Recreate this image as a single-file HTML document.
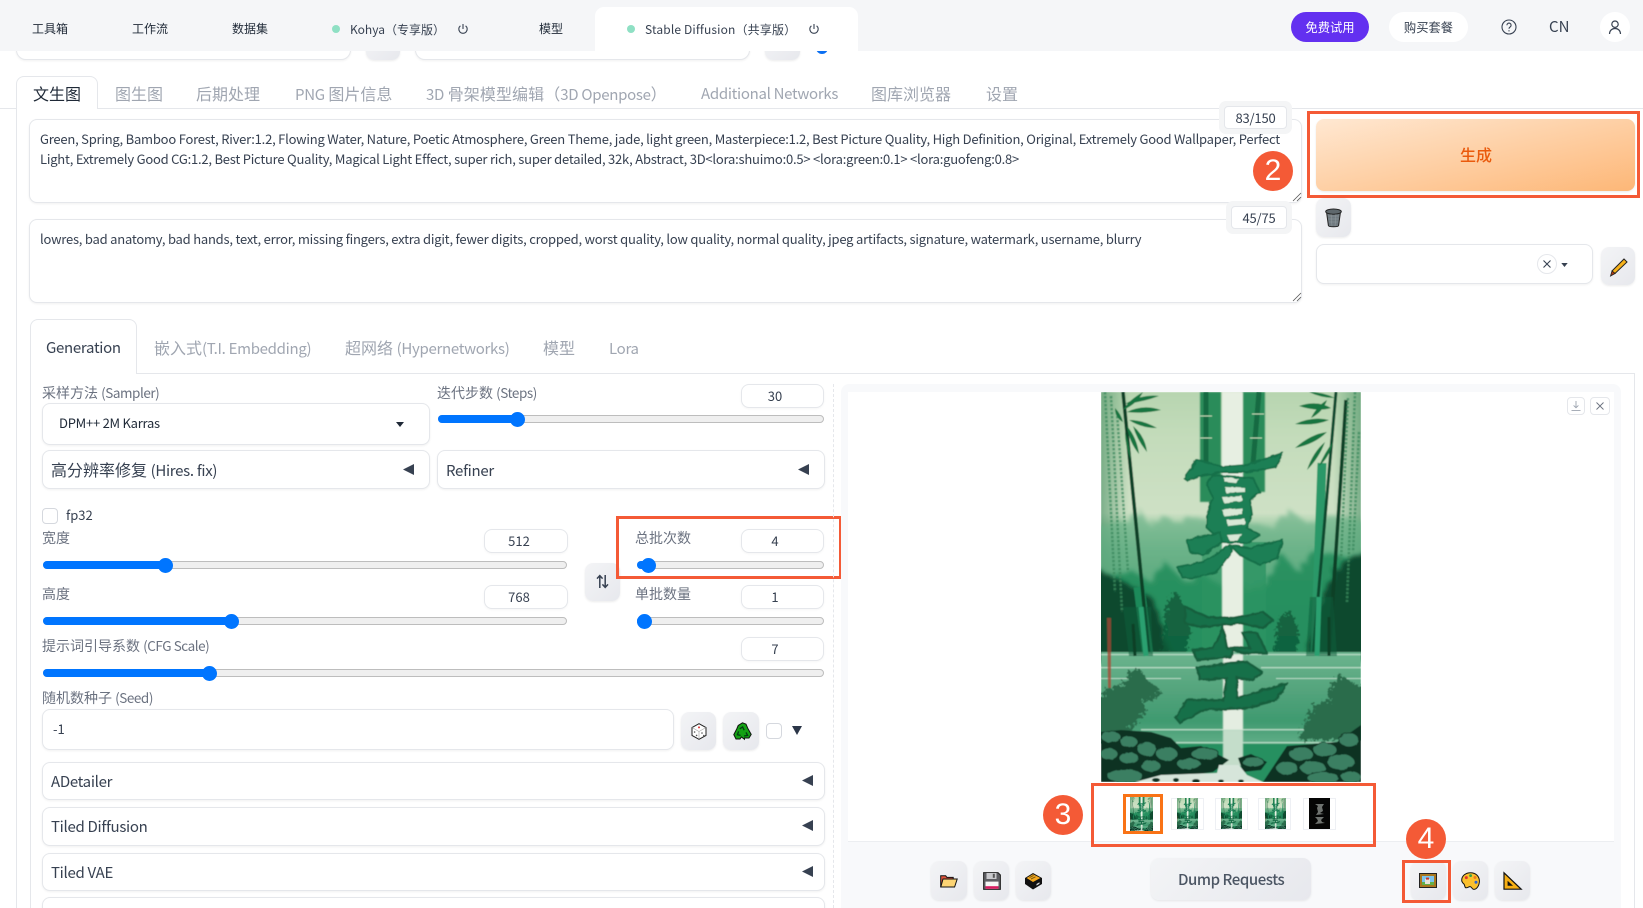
<!DOCTYPE html>
<html lang="zh"><head><meta charset="utf-8"><title>Stable Diffusion</title>
<style>
html,body{margin:0;padding:0;width:1643px;height:908px;overflow:hidden;background:#fff}
body{position:relative;font-family:"Noto Sans CJK SC","Liberation Sans",sans-serif;color:#374151;font-size:14px}
.a{position:absolute;box-sizing:border-box}
.t{position:absolute;white-space:nowrap;line-height:20px;height:20px}
.box{position:absolute;box-sizing:border-box;background:#fff;border:1px solid #e5e7eb;border-radius:8px;box-shadow:0 1px 2px rgba(0,0,0,.06)}
.btn{position:absolute;box-sizing:border-box;background:linear-gradient(135deg,#f3f4f6,#e7e8ed);border-radius:8px;box-shadow:0 1px 2px rgba(0,0,0,.08)}
.red{position:absolute;box-sizing:border-box;border:3px solid #f45a36}
.badge{position:absolute;width:40px;height:40px;border-radius:50%;background:#f45a36;color:#fff;text-align:center;line-height:40px;font-size:30px;font-family:"Liberation Sans",sans-serif}
.lb{color:#6b7280;font-size:14px}
.tab{color:#a0a6b1;font-size:16px}
.sl{position:absolute;box-sizing:border-box;height:8px;border-radius:4px;background:#efefef;border:1px solid #bdbdbd}
.fl{position:absolute;height:8px;border-radius:4px;background:#0075ff}
.th{position:absolute;width:15px;height:15px;border-radius:50%;background:#0075ff}
.num{position:absolute;box-sizing:border-box;height:24px;width:83px;background:#fff;border:1px solid #e5e7eb;border-radius:8px;line-height:22px;font-size:13px;box-shadow:0 1px 2px rgba(0,0,0,.04)}
.num span{position:absolute;top:0;transform:translateX(-50%)}
.hd{font-size:12px;color:#1f2937}
.ic{position:absolute;overflow:visible}
.p{font-size:13px;color:#374151;letter-spacing:-.22px}
i{font-style:normal}
.L{font-size:15px;letter-spacing:-.3px}
.S{font-size:13.5px;letter-spacing:-.45px}
svg{display:block}
</style></head><body>

<svg width="0" height="0" style="position:absolute"><defs>
<linearGradient id="sky" x1="0" y1="0" x2="0" y2="1">
<stop offset="0" stop-color="#b7d5b0"/><stop offset=".12" stop-color="#c4dcbb"/><stop offset=".31" stop-color="#cee1c5"/><stop offset=".34" stop-color="#a6cfab"/><stop offset=".4" stop-color="#72b68d"/><stop offset=".5" stop-color="#3f9c6d"/><stop offset=".66" stop-color="#259060"/><stop offset="1" stop-color="#259060"/>
</linearGradient>
<linearGradient id="wat" x1="0" y1="0" x2="0" y2="1"><stop offset="0" stop-color="#6cb48e"/><stop offset=".45" stop-color="#52a37b"/><stop offset=".75" stop-color="#3f9a70"/><stop offset="1" stop-color="#62ae88"/></linearGradient>
<linearGradient id="edgeL" x1="0" y1="0" x2="1" y2="0"><stop offset="0" stop-color="#2d7f52" stop-opacity=".5"/><stop offset="1" stop-color="#2d7f52" stop-opacity="0"/></linearGradient>
<linearGradient id="edgeR" x1="1" y1="0" x2="0" y2="0"><stop offset="0" stop-color="#2d7f52" stop-opacity=".5"/><stop offset="1" stop-color="#2d7f52" stop-opacity="0"/></linearGradient>
<filter id="soft" x="0" y="0" width="100%" height="100%"><feGaussianBlur stdDeviation=".45"/></filter>
<filter id="mist" x="-10%" y="-10%" width="120%" height="120%"><feTurbulence type="fractalNoise" baseFrequency=".12" numOctaves="3" seed="4" result="n"/><feDisplacementMap in="SourceGraphic" in2="n" scale="12"/><feGaussianBlur stdDeviation="2"/></filter>
<filter id="rough" x="-15%" y="-15%" width="130%" height="130%"><feTurbulence type="fractalNoise" baseFrequency=".3" numOctaves="3" seed="7" result="n"/><feDisplacementMap in="SourceGraphic" in2="n" scale="12"/></filter>
<filter id="rough2" x="-10%" y="-10%" width="120%" height="120%"><feTurbulence type="fractalNoise" baseFrequency=".15" numOctaves="2" seed="2" result="n"/><feDisplacementMap in="SourceGraphic" in2="n" scale="3"/></filter>
<filter id="bl2" x="-10%" y="-10%" width="120%" height="120%"><feGaussianBlur stdDeviation=".6"/></filter>
<symbol id="art" viewBox="0 0 260 390" preserveAspectRatio="none">
<g filter="url(#soft)">
<rect width="260" height="390" fill="url(#sky)"/>
<rect x="0" width="28" height="265" fill="url(#edgeL)"/><rect x="232" width="28" height="265" fill="url(#edgeR)"/>
<!-- mist forest -->
<path filter="url(#mist)" fill="#6ab288" opacity=".65" d="M-10 135L22 130 40 118 50 135 64 124 76 132 96 124 118 136 150 130 172 136 188 118 208 132 232 124 270 130V270H-10Z"/>
<path filter="url(#mist)" fill="#1c8a58" opacity=".8" d="M-10 190L30 178 50 190 64 170 84 190 100 180 130 200 165 190 180 160 196 180 212 158 270 170V270H-10Z"/>
<path filter="url(#mist)" fill="#0c4a2e" d="M-10 175L24 190 50 205 62 235 70 268H-10ZM270 155L240 170 226 195 214 230 204 268H270Z"/>
<path filter="url(#rough)" fill="#0f5a38" opacity=".8" d="M66 210L76 200 84 216 90 240 84 262 60 262ZM178 226L190 218 198 240 195 262 172 262Z"/>
<!-- central bamboo -->
<rect x="99" y="0" width="21" height="110" fill="#2a8c5a" filter="url(#bl2)"/><rect x="141" y="0" width="23" height="100" fill="#2a8c5a" filter="url(#bl2)"/>
<path d="M105 0V72M158 0L152 72" stroke="#146b42" stroke-width="5" fill="none"/>
<path d="M99 24h12M99 46h12M151 22h12M149 46h12" stroke="#bcd9b6" stroke-width="1"/>
<rect x="141" y="150" width="24" height="115" fill="#2d9463" opacity=".85"/><rect x="101" y="150" width="20" height="115" fill="#2d9463" opacity=".6"/>
<rect x="121" y="0" width="21" height="262" fill="#e7efe2" filter="url(#bl2)"/>
<!-- side bamboo -->
<g fill="none">
<path d="M38 195L47 264" stroke="#1f8a5a" stroke-width="11"/><path d="M221 71L214 264" stroke="#2b9868" stroke-width="9"/>
<path d="M22 0L48 264" stroke="#0b3f28" stroke-width="3.5"/><path d="M235 0L212 264" stroke="#0e4a2f" stroke-width="3"/><path d="M245 8L228 264" stroke="#0b3f28" stroke-width="3.5"/>
<g stroke="#3b8a5e" stroke-width="2.6" stroke-dasharray="2.5 1.5" opacity=".75"><path d="M4 0L14 200M10 4L21 220M16 20L27 180M254 0L246 210M247 6L240 170M258 40L252 160"/></g>
</g>
<!-- leaves -->
<g fill="#14743f">
<path d="M24 12Q40 2 58 4Q42 10 24 12ZM26 20Q42 12 60 18Q42 22 26 20ZM28 28Q42 28 56 36Q40 36 28 28ZM32 34Q44 44 46 60Q36 48 32 34ZM26 34Q36 46 38 62Q28 50 26 34ZM22 18Q28 8 42 0Q36 12 22 18ZM24 40Q28 50 30 68Q24 54 24 40ZM14 16Q20 22 22 30Q14 26 14 16Z"/>
<path d="M234 6Q222 0 208 0Q220 6 234 6ZM230 16Q216 8 198 14Q216 20 230 16ZM228 28Q212 24 194 32Q214 34 228 28ZM226 40Q210 42 194 56Q214 52 226 40ZM224 50Q212 60 206 78Q218 66 224 50ZM232 50Q224 60 218 74Q228 66 232 50ZM226 8Q216 14 210 26Q222 20 226 8Z"/>
</g>
<!-- water -->
<rect x="0" y="260" width="260" height="92" fill="url(#wat)"/>
<g fill="#c4e2cf" opacity=".85"><rect x="0" y="262" width="122" height="1.2"/><rect x="142" y="262" width="118" height="1.2"/><rect x="0" y="275" width="100" height="1.3"/><rect x="160" y="275" width="100" height="1.3"/><rect x="0" y="286" width="80" height="1"/><rect x="175" y="286" width="85" height="1"/><rect x="40" y="337" width="190" height="1.4"/><rect x="75" y="350" width="170" height="1.2"/></g>
<rect x="122" y="262" width="20" height="76" fill="#e4ede1" filter="url(#bl2)"/><rect x="122" y="338" width="20" height="36" fill="#c4ddca" filter="url(#bl2)"/>
<!-- bamboo bases -->
<path d="M22 215H50L52 264H28ZM209 205H232L236 264H205Z" fill="#0f5c3a" opacity=".55"/>
<path d="M40 215L45 264M218 205L216 264" stroke="#2aa070" stroke-width="5"/>
<path d="M32 232L34 264M228 225L228 264" stroke="#0b3f28" stroke-width="3"/>
<path fill="#a84632" opacity=".75" d="M6 226h4v70H7z"/>
<!-- trees -->
<path filter="url(#rough)" fill="#2a6c4c" d="M30 278L40 278 46 288 60 298 56 306 44 310 44 322 24 342 -6 352V308L8 296 22 292ZM240 282L250 290 266 296V348H198L208 322 214 312 228 308 228 296Z"/>
<!-- rocks -->
<path fill="#0c3323" d="M0 340L20 338 50 340 70 346 80 356 100 354 128 368 112 380 70 386 45 390H0ZM260 333L236 350 186 354 162 390H260ZM137 366L150 362 166 370 160 378 142 380Z"/>
<g fill="#3a7f62" stroke="#0a2c1d" stroke-width=".8" filter="url(#rough2)">
<ellipse cx="10" cy="345" rx="10" ry="6"/><ellipse cx="28" cy="350" rx="9" ry="6"/><ellipse cx="8" cy="362" rx="9" ry="6"/><ellipse cx="46" cy="357" rx="10" ry="7"/><ellipse cx="28" cy="366" rx="10" ry="6"/><ellipse cx="66" cy="362" rx="11" ry="7"/><ellipse cx="50" cy="374" rx="10" ry="6"/><ellipse cx="88" cy="372" rx="12" ry="6"/><ellipse cx="104" cy="362" rx="14" ry="6"/><ellipse cx="24" cy="384" rx="18" ry="7"/>
<ellipse cx="152" cy="370" rx="11" ry="5"/><ellipse cx="200" cy="362" rx="12" ry="7"/><ellipse cx="224" cy="358" rx="12" ry="7"/><ellipse cx="248" cy="348" rx="10" ry="7"/><ellipse cx="186" cy="376" rx="11" ry="7"/><ellipse cx="212" cy="376" rx="13" ry="7"/><ellipse cx="240" cy="370" rx="14" ry="8"/><ellipse cx="222" cy="386" rx="16" ry="6"/><ellipse cx="250" cy="385" rx="10" ry="6"/>
</g>
<path fill="#d6e5da" d="M34 390L60 383 116 381 118 373 138 373 146 383 162 390Z"/>
<g fill="#0c3323"><ellipse cx="55" cy="388" rx="4" ry="2"/><ellipse cx="75" cy="388" rx="3" ry="2"/><ellipse cx="95" cy="389" rx="4" ry="2"/><ellipse cx="120" cy="389" rx="3" ry="1.5"/><ellipse cx="140" cy="389" rx="3" ry="1.5"/></g>
<!-- 夏 -->
<g filter="url(#rough2)">
<g fill="#1d7f55" stroke="#14704a" stroke-width="2" stroke-linejoin="round">
<path d="M83 86L96 68 122 75 146 73 182 61 174 75 146 80 122 80 102 83 87 89Z"/>
<path d="M111 83L152 86 159 100 149 108 151 123 146 136 159 143 146 151 122 150 106 136 106 123 112 106 106 93Z"/>
<path d="M86 148L109 143 119 140 121 150 102 163 89 160Z"/>
<path d="M129 153L149 156 182 148 176 166 159 173 139 163Z"/>
<path d="M76 175L102 170 129 153 131 160 116 180 92 186 82 186Z"/>
</g>
<g fill="#d9e8d6"><path d="M122 85L138 87 134 91 124 90Z"/><path d="M124 95L144 96 144 100 125 101Z"/><path d="M121 105L141 104 141 109 123 111Z"/><path d="M121 118L141 116 141 122 123 124Z"/><path d="M126 128L144 127 144 132 127 134Z"/><path d="M126 143L141 142 137 149 129 149Z"/></g>
</g>
<!-- 至 -->
<g fill="#196f49" stroke="#145e3e" stroke-width="2.4" stroke-linejoin="round" filter="url(#rough2)">
<path d="M84 215L106 225 132 226 162 220 172 228 162 236 139 231 122 233 99 235 84 231Z"/>
<path d="M122 235L112 256 92 258 96 268 129 265 132 258 142 261 166 261 156 241 141 240 149 256 126 256Z"/>
<path d="M96 276L129 271 146 270 161 280 152 288 136 286 136 306 186 291 176 308 146 316 102 318 79 331 74 325 86 308 122 308 126 286 99 288Z"/>
</g>
</g>
</symbol>
<symbol id="ti" viewBox="0 0 18 14"><path d="M.7 13V1.8h5l1.2 1.6h6.3v2" fill="#e0533a" stroke="#111" stroke-width="1"/><path d="M.8 13L3 5h14.2L14.6 13Z" fill="#fcd474" stroke="#111" stroke-width="1"/></symbol>
</defs></svg>

<!-- residual row under header -->
<div class="box" style="left:16px;top:30px;width:335px;height:30px;border-radius:10px"></div>
<div class="btn" style="left:366px;top:30px;width:34px;height:30px"></div>
<div class="box" style="left:415px;top:30px;width:335px;height:30px;border-radius:10px"></div>
<div class="btn" style="left:765px;top:30px;width:35px;height:30px"></div>
<div class="a" style="left:816px;top:42px;width:12px;height:12px;border-radius:50%;background:#0b6ff2"></div>

<!-- header -->
<div class="a" style="left:0;top:0;width:1643px;height:51px;background:#f5f6f8"></div>
<div class="a" style="left:595px;top:7px;width:263px;height:44px;background:#fff;border-radius:9px 9px 0 0"></div>
<div class="t hd" style="left:32px;top:19px">工具箱</div>
<div class="t hd" style="left:132px;top:19px">工作流</div>
<div class="t hd" style="left:232px;top:19px">数据集</div>
<div class="a" style="left:332px;top:25px;width:8px;height:8px;border-radius:50%;background:#8fe0c4"></div>
<div class="t hd" style="left:350px;top:20px;color:#374151">Kohya（专享版）</div>
<svg class="ic" style="left:457px;top:23px" width="12" height="12" viewBox="0 0 12 12" fill="none" stroke="#374151" stroke-width="1.1"><path d="M6 1v5M3.4 2.8a4.2 4.2 0 1 0 5.2 0"/></svg>
<div class="t hd" style="left:539px;top:19px">模型</div>
<div class="a" style="left:627px;top:25px;width:8px;height:8px;border-radius:50%;background:#8fe0c4"></div>
<div class="t hd" style="left:645px;top:20px;color:#374151;letter-spacing:.15px">Stable Diffusion（共享版）</div>
<svg class="ic" style="left:808px;top:23px" width="12" height="12" viewBox="0 0 12 12" fill="none" stroke="#374151" stroke-width="1.1"><path d="M6 1v5M3.4 2.8a4.2 4.2 0 1 0 5.2 0"/></svg>
<div class="a" style="left:1291px;top:12px;width:78px;height:30px;border-radius:15px;background:#6330f0;color:#fff;font-size:12.3px;text-align:center;line-height:30px">免费试用</div>
<div class="a" style="left:1389px;top:12px;width:79px;height:30px;border-radius:15px;background:#fff;color:#374151;font-size:12.3px;text-align:center;line-height:30px">购买套餐</div>
<svg class="ic" style="left:1501px;top:19px" width="16" height="16" viewBox="0 0 16 16" fill="none" stroke="#374151" stroke-width="1.1"><circle cx="8" cy="8" r="7"/><path d="M5.9 6.2a2.1 2.1 0 1 1 3.2 1.8c-.8.5-1.1.9-1.1 1.8"/><path d="M8 11.2v1.2"/></svg>
<div class="t" style="left:1549px;top:17px;font-size:15px;color:#374151">CN</div>
<div class="a" style="left:1600px;top:12px;width:30px;height:30px;border-radius:50%;background:#fff"></div>
<svg class="ic" style="left:1608px;top:20px" width="14" height="15" viewBox="0 0 14 15" fill="none" stroke="#374151" stroke-width="1.2"><circle cx="7" cy="4.2" r="3.2"/><path d="M1.5 14c0-3.2 2.2-5.5 5.5-5.5s5.5 2.3 5.5 5.5"/></svg>

<!-- main tabs -->
<div class="a" style="left:0;top:108px;width:1643px;height:1px;background:#e5e7eb"></div>
<div class="a" style="left:16px;top:108px;width:1px;height:800px;background:#e5e7eb"></div>
<div class="a" style="left:16px;top:76px;width:82px;height:33px;background:#fff;border:1px solid #e5e7eb;border-bottom:none;border-radius:8px 8px 0 0"></div>
<div class="t" style="left:33px;top:83px;font-size:16px;color:#1f2937">文生图</div>
<div class="t tab" style="left:115px;top:83px">图生图</div>
<div class="t tab" style="left:196px;top:83px">后期处理</div>
<div class="t tab" style="left:295px;top:83px"><i class="L">PNG</i> 图片信息</div>
<div class="t tab" style="left:426px;top:83px;letter-spacing:.08px"><i class="L">3D</i> 骨架模型编辑（<i class="L">3D Openpose</i>）</div>
<div class="t tab" style="left:701px;top:82px"><i class="L">Additional Networks</i></div>
<div class="t tab" style="left:871px;top:83px">图库浏览器</div>
<div class="t tab" style="left:986px;top:83px">设置</div>

<!-- prompts -->
<div class="box" style="left:29px;top:119px;width:1273px;height:84px"></div>
<div class="t p" style="left:40px;top:129px">Green, Spring, Bamboo Forest, River:1.2, Flowing Water, Nature, Poetic Atmosphere, Green Theme, jade, light green, Masterpiece:1.2, Best Picture Quality, High Definition, Original, Extremely Good Wallpaper, Perfect</div>
<div class="t p" style="left:40px;top:149px">Light, Extremely Good CG:1.2, Best Picture Quality, Magical Light Effect, super rich, super detailed, 32k, Abstract, 3D&lt;lora:shuimo:0.5&gt; &lt;lora:green:0.1&gt; &lt;lora:guofeng:0.8&gt;</div>
<svg class="ic" style="left:1293px;top:193px" width="8" height="8" viewBox="0 0 8 8" stroke="#555" stroke-width=".8"><path d="M0 8L8 0M4 8L8 4"/></svg>
<div class="a" style="left:1219px;top:101px;width:73px;height:33px;border-radius:7px;background:#f4f5f6"></div>
<div class="a" style="left:1224px;top:106px;width:63px;height:23px;border-radius:4px;background:#fff;border:1px solid #e5e7eb;text-align:center;line-height:21px;font-size:13px;letter-spacing:-.2px">83/150</div>

<div class="box" style="left:29px;top:219px;width:1273px;height:84px"></div>
<div class="t p" style="left:40px;top:229px">lowres, bad anatomy, bad hands, text, error, missing fingers, extra digit, fewer digits, cropped, worst quality, low quality, normal quality, jpeg artifacts, signature, watermark, username, blurry</div>
<svg class="ic" style="left:1293px;top:293px" width="8" height="8" viewBox="0 0 8 8" stroke="#555" stroke-width=".8"><path d="M0 8L8 0M4 8L8 4"/></svg>
<div class="a" style="left:1226px;top:201px;width:66px;height:33px;border-radius:7px;background:#f4f5f6"></div>
<div class="a" style="left:1231px;top:206px;width:56px;height:23px;border-radius:4px;background:#fff;border:1px solid #e5e7eb;text-align:center;line-height:21px;font-size:13px;letter-spacing:-.2px">45/75</div>

<!-- generate -->
<div class="a" style="left:1316px;top:119px;width:319px;height:72px;border-radius:8px;background:linear-gradient(to bottom right,#ffe8d2 0%,#fdb777 100%);box-shadow:0 1px 2px rgba(0,0,0,.08)"></div>
<div class="t" style="left:1460px;top:144px;font-size:16px;color:#ea5a0c;font-weight:500">生成</div>
<div class="red" style="left:1307px;top:111px;width:333px;height:87px"></div>
<div class="badge" style="left:1253px;top:151px">2</div>

<div class="btn" style="left:1316px;top:198px;width:35px;height:39px"></div>
<svg class="ic" style="left:1325px;top:208px" width="17" height="19" viewBox="0 0 17 19"><path d="M1.6 4.5L3.4 17.5c.1 1 2.2 1.3 5.1 1.3s5-.3 5.1-1.3L15.4 4.5" fill="#707a80" stroke="#222" stroke-width="1"/><ellipse cx="8.5" cy="3.6" rx="7.8" ry="2.6" fill="#5f686d" stroke="#222" stroke-width="1"/><g stroke="#9aa2a6" stroke-width=".5" opacity=".8"><path d="M3 8h11M3.4 11h10.2M3.8 14h9.4M6 6l1 12M11 6l-1 12"/></g></svg>

<div class="box" style="left:1316px;top:244px;width:277px;height:40px"></div>
<div class="a" style="left:1537px;top:254px;width:20px;height:20px;border-radius:50%;border:1px solid #e5e7eb;background:#fff"></div>
<svg class="ic" style="left:1542px;top:259px" width="10" height="10" viewBox="0 0 10 10" stroke="#374151" stroke-width="1.1"><path d="M1.5 1.5l7 7M8.5 1.5l-7 7"/></svg>
<svg class="ic" style="left:1561px;top:263px" width="7" height="4" viewBox="0 0 8 5"><path d="M0 0h8L4 5z" fill="#374151"/></svg>
<div class="btn" style="left:1601px;top:247px;width:34px;height:38px"></div>
<svg class="ic" style="left:1609px;top:258px" width="19" height="19" viewBox="0 0 19 19"><path d="M15 1L18 4 6 15.5 3 13Z" fill="#f7b21b" stroke="#222" stroke-width="1"/><path d="M3 13L6 15.5 1.5 18Z" fill="#b23a12" stroke="#222" stroke-width=".8"/></svg>

<!-- sub tabs -->
<div class="a" style="left:30px;top:373px;width:1605px;height:1px;background:#e5e7eb"></div>
<div class="a" style="left:30px;top:373px;width:1px;height:535px;background:#e5e7eb"></div>
<div class="a" style="left:1634px;top:373px;width:1px;height:535px;background:#e5e7eb"></div>
<div class="a" style="left:30px;top:319px;width:107px;height:55px;background:#fff;border:1px solid #e5e7eb;border-bottom:none;border-radius:8px 8px 0 0"></div>
<div class="t" style="left:46px;top:338px;color:#374151"><i class="L">Generation</i></div>
<div class="t tab" style="left:154px;top:337px">嵌入式<i class="L">(T.I. Embedding)</i></div>
<div class="t tab" style="left:345px;top:337px">超网络 <i class="L">(Hypernetworks)</i></div>
<div class="t tab" style="left:543px;top:337px">模型</div>
<div class="t tab" style="left:609px;top:337px"><i class="L">Lora</i></div>

<!-- left column -->
<div class="t lb" style="left:42px;top:382px">采样方法 <i class="S">(Sampler)</i></div>
<div class="box" style="left:42px;top:403px;width:388px;height:42px"></div>
<div class="t" style="left:59px;top:413px;font-size:13px;color:#1f2937;letter-spacing:-.25px">DPM++ 2M Karras</div>
<svg class="ic" style="left:396px;top:422px" width="8" height="5" viewBox="0 0 8 5"><path d="M0 0h8L4 5z" fill="#1f2937"/></svg>

<div class="t lb" style="left:437px;top:382px">迭代步数 <i class="S">(Steps)</i></div>
<div class="num" style="left:741px;top:384px"><span style="left:33px">30</span></div>
<div class="sl" style="left:438px;top:415px;width:386px"></div><div class="fl" style="left:438px;top:415px;width:79px"></div><div class="th" style="left:510px;top:412px"></div>

<div class="box" style="left:42px;top:450px;width:388px;height:39px"></div>
<div class="t" style="left:51px;top:459px;font-size:16px;color:#374151">高分辨率修复 <i class="L">(Hires. fix)</i></div>
<svg class="ic" style="left:403px;top:464px" width="11" height="11" viewBox="0 0 11 11"><path d="M11 0V11L0 5.5Z" fill="#374151"/></svg>
<div class="box" style="left:437px;top:450px;width:388px;height:39px"></div>
<div class="t" style="left:446px;top:461px;color:#374151"><i class="L">Refiner</i></div>
<svg class="ic" style="left:798px;top:464px" width="11" height="11" viewBox="0 0 11 11"><path d="M11 0V11L0 5.5Z" fill="#374151"/></svg>

<div class="a" style="left:42px;top:508px;width:16px;height:16px;border:1px solid #d5d8de;border-radius:4px;background:#fff"></div>
<div class="t" style="left:66px;top:505px;font-size:13px;color:#374151">fp32</div>

<div class="t lb" style="left:42px;top:528px">宽度</div>
<div class="num" style="left:484px;top:529px;width:84px"><span style="left:34px">512</span></div>
<div class="sl" style="left:43px;top:561px;width:524px"></div><div class="fl" style="left:43px;top:561px;width:122px"></div><div class="th" style="left:158px;top:558px"></div>

<div class="btn" style="left:585px;top:563px;width:35px;height:38px"></div>
<svg class="ic" style="left:596px;top:574px" width="13" height="15" viewBox="0 0 13 15" fill="none" stroke="#374151" stroke-width="1.5"><path d="M3.8 14V2M1 4.6L3.8 1.6 6.6 4.6M9.2 1V13M6.4 10.4L9.2 13.4 12 10.4"/></svg>

<div class="t lb" style="left:635px;top:528px">总批次数</div>
<div class="num" style="left:741px;top:529px"><span style="left:33px">4</span></div>
<div class="sl" style="left:637px;top:561px;width:187px"></div><div class="fl" style="left:637px;top:561px;width:11px"></div><div class="th" style="left:641px;top:558px"></div>
<div class="red" style="left:616px;top:516px;width:226px;height:63px"></div>
<div class="badge" style="left:856px;top:521px">1</div>

<div class="t lb" style="left:42px;top:584px">高度</div>
<div class="num" style="left:484px;top:585px;width:84px"><span style="left:34px">768</span></div>
<div class="sl" style="left:43px;top:617px;width:524px"></div><div class="fl" style="left:43px;top:617px;width:188px"></div><div class="th" style="left:224px;top:614px"></div>

<div class="t lb" style="left:635px;top:584px">单批数量</div>
<div class="num" style="left:741px;top:585px"><span style="left:33px">1</span></div>
<div class="sl" style="left:637px;top:617px;width:187px"></div><div class="fl" style="left:637px;top:617px;width:7px"></div><div class="th" style="left:637px;top:614px"></div>

<div class="t lb" style="left:42px;top:635px">提示词引导系数 <i class="S">(CFG Scale)</i></div>
<div class="num" style="left:741px;top:637px"><span style="left:33px">7</span></div>
<div class="sl" style="left:43px;top:669px;width:781px"></div><div class="fl" style="left:43px;top:669px;width:166px"></div><div class="th" style="left:202px;top:666px"></div>

<div class="t lb" style="left:42px;top:687px">随机数种子 <i class="S">(Seed)</i></div>
<div class="box" style="left:42px;top:709px;width:632px;height:41px"></div>
<div class="t" style="left:53px;top:719px;font-size:13px;color:#374151">-1</div>
<div class="btn" style="left:681px;top:712px;width:35px;height:38px"></div>
<svg class="ic" style="left:691px;top:723px" width="16" height="17" viewBox="0 0 16 17"><path d="M8 .7L15 4.5V12.5L8 16.3 1 12.5V4.5Z" fill="#fff" stroke="#222" stroke-width="1"/><path d="M1 4.5L8 8.5 15 4.5M8 8.5V16" stroke="#aaa" stroke-width=".7" fill="none"/><circle cx="8" cy="4.4" r="1" fill="#d33"/><g fill="#555"><circle cx="3.6" cy="9" r=".8"/><circle cx="5.6" cy="12.4" r=".8"/><circle cx="11" cy="10" r=".8"/><circle cx="12.8" cy="12.6" r=".8"/></g></svg>
<div class="btn" style="left:723px;top:712px;width:36px;height:38px"></div>
<svg class="ic" style="left:733px;top:722px" width="19" height="18" viewBox="0 0 19 18"><path d="M9.5 .8L13 2.2 15 6.8 18.2 12.4 16 16H11.5V17.3L8.4 15 7 17H3L.8 12.6 3.8 6.8 5.2 3.5Z" fill="#14a114" stroke="#111" stroke-width="1"/><path d="M6.8 6.8L9.6 5 11.2 8.2M5.6 9.4L4.4 12.8 7.6 13.4M11 14L14.6 13.4 13 10.4" stroke="#033d12" stroke-width="1.3" fill="none"/></svg>
<div class="a" style="left:766px;top:723px;width:16px;height:16px;border:1px solid #d5d8de;border-radius:4px;background:#fff"></div>
<svg class="ic" style="left:792px;top:726px" width="10" height="9" viewBox="0 0 10 9"><path d="M0 0H10L5 9Z" fill="#2b3648"/></svg>

<div class="box" style="left:42px;top:762px;width:783px;height:38px"></div>
<div class="t" style="left:51px;top:772px;color:#374151"><i class="L">ADetailer</i></div>
<svg class="ic" style="left:802px;top:775px" width="11" height="11" viewBox="0 0 11 11"><path d="M11 0V11L0 5.5Z" fill="#374151"/></svg>
<div class="box" style="left:42px;top:807px;width:783px;height:39px"></div>
<div class="t" style="left:51px;top:817px;color:#374151"><i class="L">Tiled Diffusion</i></div>
<svg class="ic" style="left:802px;top:820px" width="11" height="11" viewBox="0 0 11 11"><path d="M11 0V11L0 5.5Z" fill="#374151"/></svg>
<div class="box" style="left:42px;top:853px;width:783px;height:38px"></div>
<div class="t" style="left:51px;top:863px;color:#374151"><i class="L">Tiled VAE</i></div>
<svg class="ic" style="left:802px;top:866px" width="11" height="11" viewBox="0 0 11 11"><path d="M11 0V11L0 5.5Z" fill="#374151"/></svg>
<div class="box" style="left:42px;top:897px;width:783px;height:30px"></div>

<div class="a" style="left:833px;top:384px;width:0;height:524px;border-left:1px dashed #e5e7eb"></div>

<!-- right panel -->
<div class="a" style="left:841px;top:384px;width:780px;height:524px;background:#f8f9fb;border-radius:8px 8px 0 0"></div>
<div class="a" style="left:848px;top:392px;width:766px;height:450px;background:#fff;border-bottom:1px solid #eceef1"></div>
<svg class="ic" style="left:1101px;top:392px;overflow:hidden" width="260" height="390"><use href="#art" width="260" height="390"/></svg>

<div class="a" style="left:1567px;top:397px;width:18px;height:18px;background:#fff;border:1px solid #e5e7eb;border-radius:4px"></div>
<svg class="ic" style="left:1571px;top:401px" width="10" height="10" viewBox="0 0 10 10" fill="none" stroke="#9ca3af" stroke-width=".9"><path d="M5 0v6.5M2.6 4.4L5 6.8 7.4 4.4M0.5 9.4h9"/></svg>
<div class="a" style="left:1590px;top:397px;width:20px;height:18px;background:#fff;border:1px solid #e5e7eb;border-radius:4px"></div>
<svg class="ic" style="left:1596px;top:402px" width="8" height="8" viewBox="0 0 8 8" stroke="#6b7280" stroke-width=".9"><path d="M.5.5l7 7M7.5.5l-7 7"/></svg>

<!-- thumbnails -->
<div class="red" style="left:1091px;top:783px;width:285px;height:64px"></div>
<div class="a" style="left:1123px;top:794px;width:40px;height:40px;border:3px solid #f97316;background:#fff"></div>
<svg class="ic" style="left:1130px;top:797px;overflow:hidden" width="23" height="34"><use href="#art" width="23" height="34"/></svg>
<div class="a" style="left:1171px;top:798px;width:33px;height:32px;background:#fff;border:1px solid #eef0f4"></div>
<svg class="ic" style="left:1177px;top:798px;overflow:hidden" width="21" height="31"><use href="#art" width="21" height="31"/></svg>
<div class="a" style="left:1215px;top:798px;width:33px;height:32px;background:#fff;border:1px solid #eef0f4"></div>
<svg class="ic" style="left:1221px;top:798px;overflow:hidden" width="21" height="31"><use href="#art" width="21" height="31"/></svg>
<div class="a" style="left:1258px;top:798px;width:33px;height:32px;background:#fff;border:1px solid #eef0f4"></div>
<svg class="ic" style="left:1265px;top:798px;overflow:hidden" width="21" height="31"><use href="#art" width="21" height="31"/></svg>
<div class="a" style="left:1303px;top:798px;width:33px;height:32px;background:#fff;border:1px solid #eef0f4"></div>
<svg class="ic" style="left:1309px;top:798px" width="21" height="31" viewBox="0 0 21 31"><rect width="21" height="31" fill="#050505"/><path d="M6 6h9l-2 3 1 4-3 2 4 1-8 1 2-3-1-4 1-2zM6 19h9l-3 3 1 2 3 1-10 1 3-3-1-2z" fill="#6f7370"/></svg>
<div class="badge" style="left:1043px;top:795px">3</div>

<!-- bottom tools -->
<div class="btn" style="left:931px;top:861px;width:36px;height:39px"></div>
<svg class="ic" style="left:940px;top:874px" width="18" height="14"><use href="#ti" width="18" height="14"/></svg>
<div class="btn" style="left:974px;top:861px;width:35px;height:39px"></div>
<svg class="ic" style="left:983px;top:872px" width="18" height="18" viewBox="0 0 18 18"><path d="M.6.6H15L17.4 3V17.4H.6Z" fill="#5e5e63" stroke="#222" stroke-width="1"/><rect x="3.5" y="1" width="10" height="6" fill="#c9c9cd"/><rect x="9.8" y="1.8" width="2" height="4" fill="#555"/><rect x="2.5" y="9.6" width="13" height="7.2" fill="#f6f6f6"/><rect x="2.5" y="14.2" width="13" height="2.6" fill="#d81b60"/></svg>
<div class="btn" style="left:1016px;top:861px;width:35px;height:39px"></div>
<svg class="ic" style="left:1024px;top:872px" width="19" height="18" viewBox="0 0 19 18"><path d="M1 6L9 1 18 6V12L9 17.5 1 12Z" fill="#111"/><path d="M2.6 6L9 2.2 16.4 6 9 10Z" fill="#f6a91f"/><path d="M5.5 5.6L9.6 3.4M7 7L11.5 4.8" stroke="#7a5a10" stroke-width="1"/><path d="M12.5 12l3-1.8v1.6l-3 1.8z" fill="#ddd"/></svg>

<div class="btn" style="left:1151px;top:858px;width:160px;height:42px"></div>
<div class="t" style="left:1178px;top:870px;font-size:15px;font-weight:500;color:#4b5563;letter-spacing:-.44px">Dump Requests</div>

<div class="btn" style="left:1411px;top:861px;width:35px;height:39px"></div>
<svg class="ic" style="left:1419px;top:873px" width="18" height="15" viewBox="0 0 18 15"><rect x=".5" y=".5" width="17" height="14" fill="#a8771f" stroke="#222"/><rect x="3" y="3" width="12" height="9" fill="#7cc4ee"/><rect x="3" y="9" width="12" height="3" fill="#62b04a"/><rect x="6" y="6" width="5" height="5" fill="#e8e3d8"/><rect x="7" y="4.6" width="3" height="2" fill="#c8322c"/></svg>
<div class="red" style="left:1402px;top:860px;width:49px;height:43px"></div>
<div class="badge" style="left:1406px;top:819px">4</div>
<div class="btn" style="left:1453px;top:861px;width:35px;height:39px"></div>
<svg class="ic" style="left:1461px;top:872px" width="19" height="18" viewBox="0 0 19 18"><path d="M9.5.7C14.8.7 18.4 4.3 18.4 9c0 4.5-2.7 8.4-5.5 8.4-2 0-2.2-2.8-3.8-2.8-1.5 0-2.2 1.2-4 1.2-1.7 0-1-2.6-2.2-3.8C1.6 10.8.7 9.8.7 8.2.7 3.8 4.8.7 9.5.7Z" fill="#fbc02d" stroke="#111" stroke-width="1"/><circle cx="5.3" cy="5.6" r="1.5" fill="#e2352d"/><circle cx="9.6" cy="3.6" r="1.4" fill="#33a04a"/><circle cx="14" cy="5.5" r="1.5" fill="#ef7a1d"/><circle cx="15" cy="10.2" r="1.5" fill="#2a62d4"/></svg>
<div class="btn" style="left:1495px;top:861px;width:35px;height:39px"></div>
<svg class="ic" style="left:1503px;top:872px" width="19" height="18" viewBox="0 0 19 18"><path d="M1 .8V17.2H18.2Z" fill="#f6ae13" stroke="#111" stroke-width="1.2"/><path d="M4.6 8.8V13.8H10Z" fill="#111"/></svg>

</body></html>
